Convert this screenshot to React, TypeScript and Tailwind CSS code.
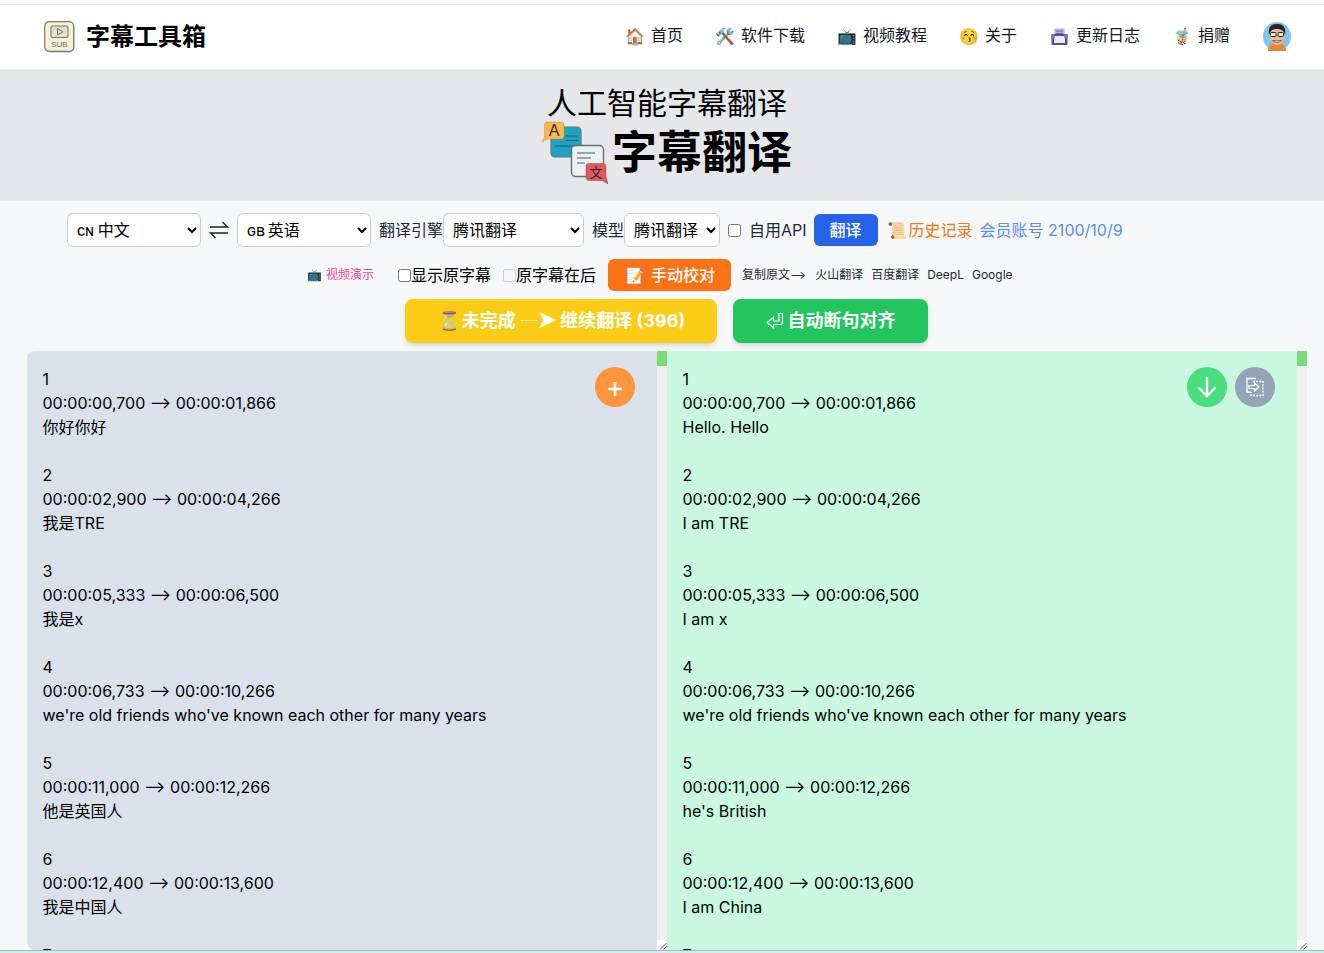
import React from "react";

const FONT = "font-['Inter','Noto_Sans_CJK_SC',sans-serif]";

const entries: [string, string, string][] = [
  ["00:00:00,700 --> 00:00:01,866", "你好你好", "Hello. Hello"],
  ["00:00:02,900 --> 00:00:04,266", "我是TRE", "I am TRE"],
  ["00:00:05,333 --> 00:00:06,500", "我是x", "I am x"],
  ["00:00:06,733 --> 00:00:10,266", "we're old friends who've known each other for many years", "we're old friends who've known each other for many years"],
  ["00:00:11,000 --> 00:00:12,266", "他是英国人", "he's British"],
  ["00:00:12,400 --> 00:00:13,600", "我是中国人", "I am China"],
];

function build(col: 1 | 2) {
  const parts: string[] = [];
  for (let i = 0; i < 24; i++) {
    const e = entries[i % entries.length];
    parts.push(`${i + 1}\n${e[0]}\n${e[col]}\n`);
  }
  return parts.join("\n");
}

const Emoji = ({ c, w = "w-4", size = "text-[16px]" }: { c: string; w?: string; size?: string }) => (
  <span className={`flex ${w} shrink-0 items-center justify-center ${size} leading-none`}>{c}</span>
);

const Notepad = () => (
  <svg width="17" height="17" viewBox="0 0 17 17" className="shrink-0">
    <rect x="3.5" y="0.5" width="10" height="9" fill="#a4b8e0" />
    <path d="M5 3 H12 M5 5.5 H12" stroke="#5f6f9c" strokeWidth="1" />
    <rect x="0.5" y="6" width="16" height="11" rx="1" fill="#5a4a96" />
    <rect x="3" y="8" width="11" height="7" fill="#eeeaf8" />
    <rect x="0.5" y="6" width="3" height="5" fill="#7a68b8" />
    <rect x="13.5" y="6" width="3" height="5" fill="#7a68b8" />
  </svg>
);
const Avatar = () => (
  <svg width="28" height="29" viewBox="0 0 28 29" className="-ml-px shrink-0">
    <ellipse cx="14" cy="14.5" rx="14" ry="14.5" fill="#7cc8e8" />
    <path d="M5 29 Q5 21 14 21 Q23 21 23 29 Z" fill="#e8873a" />
    <ellipse cx="14" cy="14" rx="7.5" ry="9" fill="#eeb890" />
    <path d="M6 13 Q4.5 1.5 14 2 Q23.5 1.5 22 13 Q20.5 6.5 14 7 Q7.5 6.5 6 13 Z" fill="#22242a" />
    <rect x="7.5" y="10.5" width="5.5" height="4" rx="1" fill="#dfeef4" stroke="#1e1e22" strokeWidth="1" />
    <rect x="15" y="10.5" width="5.5" height="4" rx="1" fill="#dfeef4" stroke="#1e1e22" strokeWidth="1" />
    <path d="M9.5 18.5 Q14 22.5 18.5 18.5 Q14 19.5 9.5 18.5 Z" fill="#fff" stroke="#6a3020" strokeWidth="0.7" />
  </svg>
);
const Logo = () => (
  <svg width="31" height="32" viewBox="0 0 31 32" className="shrink-0">
    <rect x="1" y="1.5" width="29.5" height="30" rx="5" fill="#a8c0d8" />
    <rect x="0.7" y="0.7" width="29" height="29.6" rx="4.5" fill="#f6f1d6" stroke="#77776a" strokeWidth="1.2" />
    <rect x="7" y="5" width="17" height="11.5" rx="1.5" fill="#e4e0c8" stroke="#77776a" strokeWidth="1.1" />
    <path d="M13.5 7.5 L19 10.8 L13.5 14 Z" fill="none" stroke="#77776a" strokeWidth="1" />
    <text x="15.3" y="26" textAnchor="middle" fontSize="8" fill="#6e6e62" fontFamily="Liberation Sans">SUB</text>
  </svg>
);
const HeroLogo = () => (
  <svg width="66" height="65" viewBox="0 0 66 65" className="shrink-0">
    <rect x="9" y="7" width="30" height="30" rx="4" fill="#1fa3c0" stroke="#5f7d88" strokeWidth="1.2" />
    <path d="M24 16 H36 M24 20.5 H36 M13 26 H32" stroke="#20586a" strokeWidth="1" />
    <path d="M5 2 H19 Q22 2 22 5 V16 Q22 19 19 19 H5 L0 22 L2.5 17 V5 Q2.5 2 5 2 Z" fill="#f9b950" stroke="#d08a30" strokeWidth="0.5" />
    <text x="12" y="16" textAnchor="middle" fontSize="16" fill="#333" fontFamily="Liberation Sans">A</text>
    <rect x="29.5" y="25.5" width="32" height="31" rx="4" fill="#e7f3f1" stroke="#6e6e6e" strokeWidth="1.4" />
    <path d="M35 33 H53 M35 38 H49 M35 43 H43" stroke="#555" strokeWidth="1" />
    <path d="M47 43.5 H61 Q64 43.5 64 46.5 V57 L66 64 L60 60.5 H47 Q44 60.5 44 57.5 V46.5 Q44 43.5 47 43.5 Z" fill="#dd5a62" stroke="#a04048" strokeWidth="0.5" />
    <text x="54" y="57" textAnchor="middle" fontSize="13" fill="#3a2020" fontFamily="Noto Sans CJK SC">文</text>
  </svg>
);
const Swap = () => (
  <svg width="20" height="20" viewBox="0 0 20 20" fill="none" stroke="#222" strokeWidth="1.4" className="shrink-0">
    <path d="M1 7 H18.5 L13.5 2" />
    <path d="M19 13 H1.5 L6.5 18" />
  </svg>
);
const Return = () => (
  <svg width="18" height="18" viewBox="0 0 18 18" fill="none" stroke="#fff" strokeWidth="1.2" className="shrink-0">
    <path d="M11.5 1.5 H16.5 V10.5 Q16.5 12.5 14.5 12.5 H7.5 V16 L1 10.5 L7.5 5.5 V9 H13 V1.5 Z" />
  </svg>
);
const CopyDoc = () => (
  <svg width="20" height="20" viewBox="0 0 20 20" fill="none" stroke="#fff" strokeWidth="1.3" className="shrink-0">
    <path d="M11 1.5 H2 V15 H5.5" />
    <path d="M8 4.5 H18 V18.5 H6 V15" strokeDasharray="2 1.2" />
    <path d="M4 8.5 H9.5 V6 L14 10 L9.5 14 V11.5 H4 Z" strokeWidth="1.2" />
  </svg>
);

const TA_CLASS = "block h-full w-[630px] resize-none p-4 text-base leading-6 text-black outline-none overflow-hidden";

const ScrollStrip = () => (
  <div className="flex h-full w-2.5 flex-col justify-between bg-[#f0f0f0]">
    <div className="h-[15px] bg-[#77dd77]" />
    <div className="h-2.5 bg-white">
      <svg width="10" height="10" viewBox="0 0 10 10" stroke="#555" strokeWidth="1" fill="none">
        <path d="M3 9.5 L9.5 3 M6.5 9.5 L9.5 6.5" />
      </svg>
    </div>
  </div>
);

const NavItem = ({ icon, label }: { icon: React.ReactNode; label: string }) => (
  <a className="flex items-center gap-2 text-base text-[#111827]">
    {icon}
    <span className="pb-0.5">{label}</span>
  </a>
);

const SEL = "h-[34px] rounded-md border border-[#cccccc] bg-white pl-[5px] text-base text-black";

export default function App() {
  return (
    <div className={`${FONT} h-[953px] overflow-hidden bg-[#f6f7f9] text-black`}>
      <div className="h-1 bg-white" />
      <nav className="flex h-[65px] items-center justify-between border-t border-[#e5e7eb] bg-white pl-[44px] pr-[33px]">
        <div className="flex items-center gap-[11px]">
          <Logo />
          <span className="text-2xl font-bold">字幕工具箱</span>
        </div>
        <div className="flex items-center gap-[34px] pb-0.5">
          <NavItem icon={<Emoji c="🏠" />} label="首页" />
          <NavItem icon={<Emoji c="🛠️" />} label="软件下载" />
          <NavItem icon={<Emoji c="📺" />} label="视频教程" />
          <NavItem icon={<Emoji c="😚" />} label="关于" />
          <NavItem icon={<Notepad />} label="更新日志" />
          <NavItem icon={<Emoji c="🧋" />} label="捐赠" />
          <Avatar />
        </div>
      </nav>

      <header className="flex h-[132px] flex-col items-center bg-[#e5e7eb] pl-2.5 pt-4">
        <h2 className="text-3xl leading-9">人工智能字幕翻译</h2>
        <div className="-mt-px flex items-center gap-[4px]">
          <HeroLogo />
          <span className="text-[45px] font-bold leading-[65px]">字幕翻译</span>
        </div>
      </header>

      <div className="mt-3 flex h-[34px] items-center pl-[67px] text-base">
        <select className={`${SEL} w-[134px]`} defaultValue="zh">
          <option value="zh">{"\u2004ᴄɴ\u2005中文"}</option>
        </select>
        <span className="mx-2"><Swap /></span>
        <select className={`${SEL} w-[134px]`} defaultValue="en">
          <option value="en">{"\u2004ɢʙ\u2006英语"}</option>
        </select>
        <span className="ml-2 text-[#1f2937]">翻译引擎</span>
        <select className={`${SEL} w-[141px]`}>
          <option>腾讯翻译</option>
        </select>
        <span className="ml-2 text-[#1f2937]">模型</span>
        <select className={`${SEL} w-[96px]`}>
          <option>腾讯翻译</option>
        </select>
        <input type="checkbox" className="ml-2 h-[13px] w-[13px]" />
        <span className="ml-2 text-[#1f2937]">自用API</span>
        <button className="ml-[7px] h-8 w-16 rounded-md bg-[#2563eb] font-medium text-white">翻译</button>
        <Emoji c="📜" w="ml-[10px] w-[18px]" size="text-[16px]" />
        <span className="ml-[3px] text-[#f97316]">历史记录</span>
        <span className="ml-[7px] text-[#5b8def]">会员账号 2100/10/9</span>
      </div>

      <div className="mt-3 flex h-8 items-center pl-[308px]">
        <Emoji c="📺" w="w-[13px]" size="text-[12px]" />
        <span className="ml-[5px] text-xs text-[#ec4899]">视频演示</span>
        <input type="checkbox" className="ml-6 h-[13px] w-[13px]" />
        <span className="text-base">显示原字幕</span>
        <input type="checkbox" disabled className="ml-3 h-[13px] w-[13px]" />
        <span className="text-base">原字幕在后</span>
        <button className="ml-3 flex h-8 w-[123px] items-center pl-[20px] rounded-md bg-[#f97316] text-base font-medium text-white">
          <Emoji c="📝" w="w-[15px]" size="text-[15px]" />
          <span className="ml-2">手动校对</span>
        </button>
        <span className="ml-[11px] text-xs text-[#1f2937]">复制原文--&gt;</span>
        <span className="ml-[9px] text-xs text-[#1f2937]">火山翻译</span>
        <span className="ml-2 text-xs text-[#1f2937]">百度翻译</span>
        <span className="ml-2 text-xs text-[#1f2937]">DeepL</span>
        <span className="ml-2 text-xs text-[#1f2937]">Google</span>
      </div>

      <div className="mt-2 flex h-11 justify-center gap-4 pl-[9px]">
        <button className="flex w-[312px] items-center justify-center rounded-lg bg-[#facc15] pl-1 text-lg font-bold text-white shadow-md">
          <Emoji c="⏳" w="w-4" size="text-[18px]" />
          <span className="ml-[5px]">
            未完成 ┈<span className="text-[22px] leading-none">➤</span> 继续翻译 (396)
          </span>
        </button>
        <button className="flex w-[195px] items-center justify-center gap-1 rounded-lg bg-[#22c55e] text-lg font-bold text-white shadow-md">
          <Return />
          <span>自动断句对齐</span>
        </button>
      </div>

      <div className="mt-2 flex h-[599px] pl-[26.5px]">
        <div className="relative flex h-full w-[640px]">
          <textarea readOnly className={`${TA_CLASS} rounded-l-lg bg-[#dbe1ea]`} value={build(1)} />
          <ScrollStrip />
          <button className="absolute right-8 top-4 flex h-10 w-10 items-center justify-center rounded-full bg-[#fd953d]">
            <svg width="16" height="20" viewBox="0 0 16 20" stroke="#fff" strokeWidth="2.6">
              <path d="M8 5 V19 M1 12 H15" />
            </svg>
          </button>
        </div>
        <div className="relative flex h-full w-[640px]">
          <textarea readOnly className={`${TA_CLASS} bg-[#c9f7e0]`} value={build(2)} />
          <ScrollStrip />
          <div className="absolute right-8 top-4 flex gap-2">
            <button className="flex h-10 w-10 items-center justify-center rounded-full bg-[#4ade80]">
              <svg width="24" height="24" viewBox="0 0 24 24" fill="none" stroke="#fff" strokeWidth="2.4">
                <path d="M12 2 V21 M3.5 12.5 L12 21 L20.5 12.5" />
              </svg>
            </button>
            <button className="flex h-10 w-10 items-center justify-center rounded-full bg-[#94a3b8]">
              <CopyDoc />
            </button>
          </div>
        </div>
      </div>
      <div className="h-px bg-[#a9b4b8]" />
      <div className="h-[3px] bg-[#cdeff0]" />
    </div>
  );
}
